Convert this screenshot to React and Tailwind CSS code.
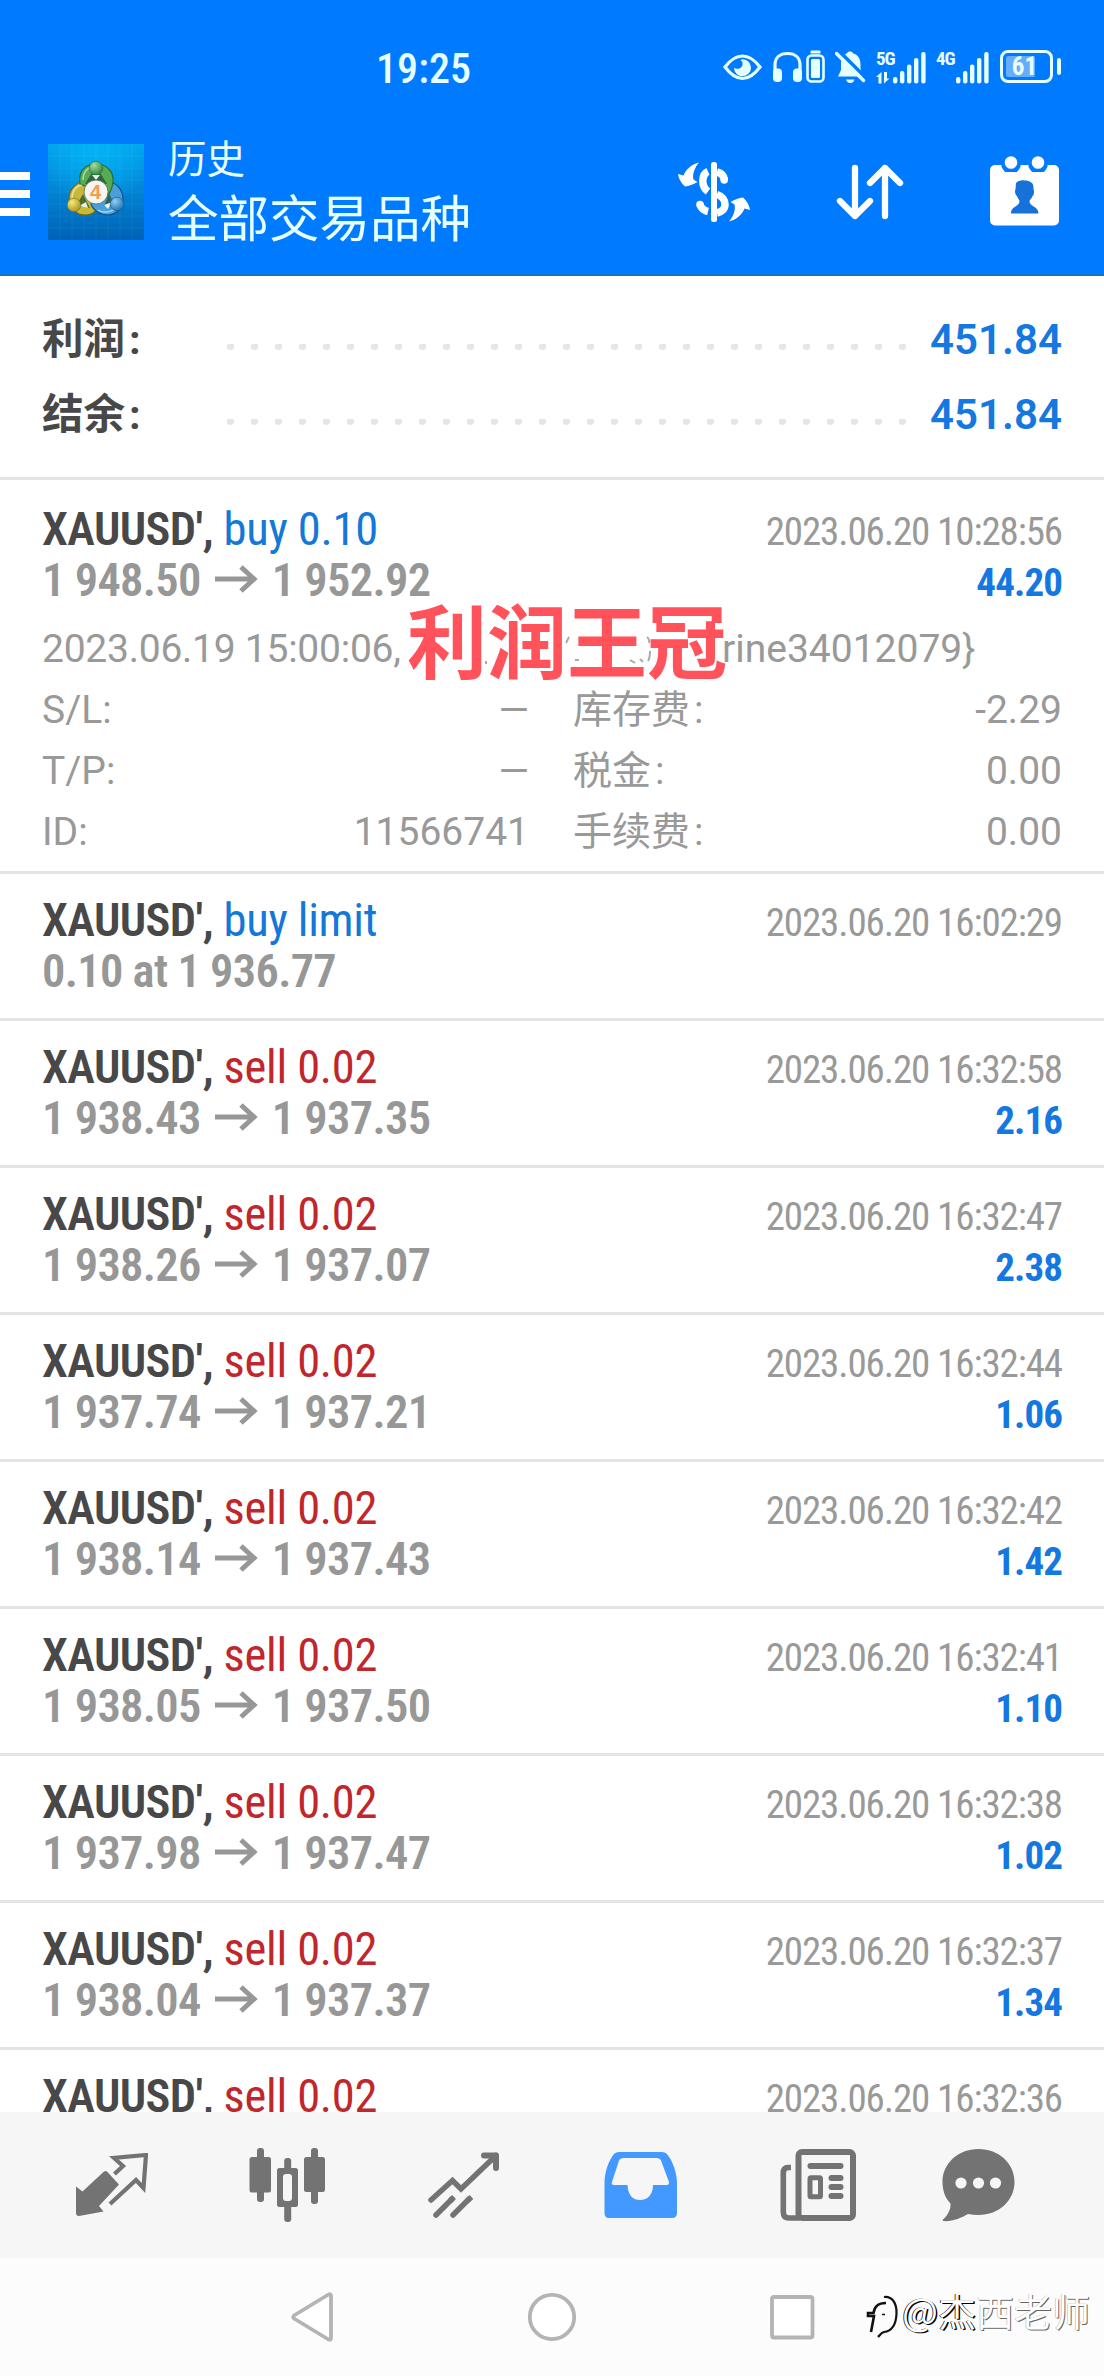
const deals = [
  { type: 'sell 0.02', from: '1 938.43', to: '1 937.35', time: '2023.06.20 16:32:58', profit: '2.16' },
  { type: 'sell 0.02', from: '1 938.26', to: '1 937.07', time: '2023.06.20 16:32:47', profit: '2.38' },
  { type: 'sell 0.02', from: '1 937.74', to: '1 937.21', time: '2023.06.20 16:32:44', profit: '1.06' },
  { type: 'sell 0.02', from: '1 938.14', to: '1 937.43', time: '2023.06.20 16:32:42', profit: '1.42' },
  { type: 'sell 0.02', from: '1 938.05', to: '1 937.50', time: '2023.06.20 16:32:41', profit: '1.10' },
  { type: 'sell 0.02', from: '1 937.98', to: '1 937.47', time: '2023.06.20 16:32:38', profit: '1.02' },
  { type: 'sell 0.02', from: '1 938.04', to: '1 937.37', time: '2023.06.20 16:32:37', profit: '1.34' },
];

const SignalBars = () => (
  <svg className="w-[33px] h-[32px]" viewBox="0 0 33 32" fill="currentColor">
    <rect x="0" y="25" width="4.4" height="6.5" rx="2" />
    <rect x="7" y="19" width="4.4" height="12.5" rx="2" />
    <rect x="14" y="12.5" width="4.4" height="19" rx="2" />
    <rect x="21" y="6" width="4.4" height="25.5" rx="2" />
    <rect x="28.2" y="0" width="4.4" height="31.5" rx="2" />
  </svg>
);

const StatusBar = () => (
  <div className="flex items-start h-[136px] pt-[50px] pl-[376px] text-[#e6ffff]">
    <span className="w-[347px] text-[42px] leading-[37px] font-medium [font-stretch:83%] tracking-[0.1px]">19:25</span>
    <svg className="w-[39px] h-[34px]" viewBox="0 0 39 34">
      <path d="M2 17C8 9 13 6 19.500 6S31 9 37 17C31 25 26 28.500 19.500 28.500S8 25 2 17Z" fill="none" stroke="currentColor" strokeWidth="3.200" />
      <path d="M19 9.200A8.500 8.500 0 1 1 11 17.500C12.500 19 16 19.500 18 17.500S20.500 12 17.500 10Z" fill="currentColor" />
    </svg>
    <svg className="w-[29px] h-[34px] ml-[11px]" viewBox="0 0 29 34">
      <path d="M2 22V15C2 7.500 7 3.500 14.500 3.500S27 7.500 27 15V22" fill="none" stroke="currentColor" strokeWidth="3.200" />
      <rect x="0" y="18.500" width="9" height="13.500" rx="4" fill="currentColor" />
      <rect x="20" y="18.500" width="9" height="13.500" rx="4" fill="currentColor" />
    </svg>
    <svg className="w-[19px] h-[34px] ml-[4px]" viewBox="0 0 19 34" fill="none">
      <rect x="4.500" y="0.500" width="10" height="3" rx="1" fill="currentColor" />
      <rect x="1.500" y="5.500" width="16" height="26" rx="4" stroke="currentColor" strokeWidth="2.600" />
      <rect x="5" y="9" width="9" height="19" rx="1.500" fill="currentColor" />
    </svg>
    <svg className="w-[31px] h-[34px] ml-[10px]" viewBox="0 0 31 34">
      <path d="M15 1.500C16.500 1.500 17.500 2.200 18 3.200C23 4.500 25.500 9 25.500 14V19L28 26.500H3L6 20V13C6 9 8 5 12 3.200C12.500 2.200 13.500 1.500 15 1.500ZM11 29.500H19.500C19 32 17 33 15.300 33S11.500 32 11 29.500Z" fill="currentColor" />
      <path d="M3 0L31 28" stroke="#007aff" strokeWidth="3.500" />
      <path d="M1.500 3.500L28.500 30.500" stroke="currentColor" strokeWidth="3.400" strokeLinecap="round" />
    </svg>
    <div className="w-[18px] h-[34px] ml-[10px] pt-px flex flex-col">
      <span className="text-[19px] leading-[16px] font-bold font-['Roboto_Condensed'] tracking-[-1px]">5G</span>
      <svg className="w-[14px] h-[12px] mt-[5px]" viewBox="0 0 14 12">
        <path d="M0 5L5.500 0V11.500H2.500V5ZM8 0V11.500L13.500 6.500H11V0Z" fill="currentColor" />
      </svg>
    </div>
    <div className="mt-[1.500px] -ml-[1px]"><SignalBars /></div>
    <span className="w-[19px] ml-[10px] pt-px text-[19px] leading-[16px] font-bold font-['Roboto_Condensed'] tracking-[-1px]">4G</span>
    <div className="mt-[1.500px] ml-px"><SignalBars /></div>
    <div className="flex items-center ml-[11px]">
      <div className="relative w-[53px] h-[33px] border-[3px] rounded-[8px] border-[#e6ffff] flex items-center justify-center">
        <div className="absolute left-[3px] top-[3px] w-[29px] h-[21px] rounded-[2px] bg-[#66adff]"></div>
        <span className="relative text-[25px] leading-[25px] font-bold [font-stretch:85%] -ml-[4px]">61</span>
      </div>
      <div className="w-[4px] h-[17px] ml-[4px] rounded-full bg-[#e6ffff]"></div>
    </div>
  </div>
);

const Logo = () => (
  <svg className="w-[96px] h-[96px]" viewBox="0 0 96 96">
    <defs>
      <linearGradient id="sky" x1="0" y1="0" x2="0" y2="1">
        <stop offset="0" stopColor="#02a3ee" />
        <stop offset="0.5" stopColor="#0283d4" />
        <stop offset="1" stopColor="#0062b4" />
      </linearGradient>
      <radialGradient id="glow" cx="0.5" cy="0.05" r="0.6">
        <stop offset="0" stopColor="#03b2f4" />
        <stop offset="1" stopColor="#03b2f4" stopOpacity="0" />
      </radialGradient>
      <radialGradient id="green" cx="0.35" cy="0.3" r="0.8">
        <stop offset="0" stopColor="#a5dc9c" />
        <stop offset="1" stopColor="#27823b" />
      </radialGradient>
      <radialGradient id="yellow" cx="0.35" cy="0.3" r="0.8">
        <stop offset="0" stopColor="#f5eb7d" />
        <stop offset="1" stopColor="#a38c1c" />
      </radialGradient>
      <radialGradient id="blue" cx="0.35" cy="0.3" r="0.8">
        <stop offset="0" stopColor="#8fd0f6" />
        <stop offset="1" stopColor="#1769ad" />
      </radialGradient>
    </defs>
    <rect width="96" height="96" fill="url(#sky)" />
    <rect width="96" height="96" fill="url(#glow)" />
    <path d="M0 12H96M0 24H96M0 36H96M0 48H96M0 60H96M0 72H96M0 84H96M12 0V96M24 0V96M36 0V96M48 0V96M60 0V96M72 0V96M84 0V96" stroke="#fff" strokeOpacity="0.06" />
    {/* three discs with a figure each, around the version badge */}
    <path d="M35 38C29 38 21 45 21 54C21 65 29 71 37 71C42 71 46 69 48 66L50 48Z" fill="#c9ba35" stroke="#6d6413" strokeWidth="1.200" />
    <path d="M61 38C69 39 75 46 75 55C75 65 67 71 60 71C52 71 45 66 43 60L50 46Z" fill="#4a9fdb" stroke="#12558c" strokeWidth="1.200" />
    <path d="M32 40C30 27 37 20 48 20C60 20 66 29 65 38C64 46 61 51 57 55L48 46Z" fill="#57ab53" stroke="#236d30" strokeWidth="1.200" />
    <path d="M35 36C35 28 40 23 46 23M24 54C24 47 28 42 34 41M50 66C54 69 66 70 71 60" fill="none" stroke="#fff" strokeOpacity="0.55" strokeWidth="1.500" />
    <path d="M37 40L45 27H51L59 40ZM28 62L35 50L42 64ZM56 62L61 50L68 62Z" fill="#1f5136" fillOpacity="0.75" />
    <path d="M44 31L48 36L52 31ZM31 62L38 58L40 64ZM56 61L64 58L60 65Z" fill="#e8f2e6" />
    <circle cx="48" cy="24" r="6.800" fill="url(#green)" stroke="#2a6a34" strokeWidth="0.600" />
    <circle cx="26" cy="61" r="6.800" fill="url(#yellow)" stroke="#7a6c15" strokeWidth="0.600" />
    <circle cx="69" cy="60" r="6.800" fill="url(#blue)" stroke="#15558c" strokeWidth="0.600" />
    <circle cx="48" cy="48" r="12" fill="#f7f4f2" stroke="#4f6b52" strokeWidth="0.800" />
    <text x="47.500" y="55" textAnchor="middle" fontSize="20" fontWeight="600" fontFamily="Liberation Sans, sans-serif" fill="#f39b50">4</text>
  </svg>
);

const Header = () => (
  <header className="h-[276px] shrink-0 bg-[#007aff] border-b-2 border-[#1a6fc8] text-white">
    <StatusBar />
    <div className="flex items-start">
      <div className="w-[30px] mt-[36px] flex flex-col gap-[10px]">
        <div className="h-[8px] bg-white"></div>
        <div className="h-[8px] bg-white"></div>
        <div className="h-[8px] bg-white"></div>
      </div>
      <div className="mt-[8px] ml-[18px]"><Logo /></div>
      <div className="w-[510px] ml-[24px] -mt-[2px] text-[#e6ffff] font-['Noto_Sans_CJK_SC']">
        <div className="text-[38.500px] leading-[44px]">历史</div>
        <div className="text-[50.500px] leading-[64px] mt-[5px]">全部交易品种</div>
      </div>
      <svg className="w-[72px] h-[60px] mt-[26px]" viewBox="0 0 72 60">
        <rect x="33" y="0" width="6" height="60" rx="2.500" fill="#fff" />
        <g fill="none" stroke="#fff" strokeWidth="7.500">
          <path d="M30 9.500C26.500 11 24.800 15 24.800 19S26.500 27 30 29.500" />
          <path d="M39 10C43 11 46 14 46.500 18" />
          <path d="M46.200 17.500V18" strokeLinecap="round" />
          <path d="M39 32.500C44 34 47 38 47 42.500S43.500 50 39 51" />
          <path d="M30 49.500C26 48.500 23 46 22 42.500" />
          <path d="M22 42.500V42.600" strokeLinecap="round" />
        </g>
        <g fill="#fff">
          <path d="M21 0.500C13 2.500 7.500 8 5.500 13.500L0 12C0.500 16 3 21 7 24.500C11 24 15 22.500 19.500 20L15.500 17.500C14 12 17 5 21 0.500Z" />
          <path d="M51 59.500C59 57.500 64.500 52 66.500 46.500L72 48C71.500 44 69 39 65 35.500C61 36 57 37.500 52.500 40L56.500 42.500C58 48 55 55 51 59.500Z" />
        </g>
      </svg>
      <svg className="w-[68px] h-[56px] ml-[86px] mt-[28px]" viewBox="0 0 68 56" fill="none" stroke="#fff" strokeWidth="6.300" strokeLinecap="round" strokeLinejoin="round">
        <path d="M19 4V52M4 37L19 52L34 37" />
        <path d="M49 52V4M34 19L49 4L64 19" />
      </svg>
      <svg className="w-[69px] h-[70px] ml-[86px] mt-[20px]" viewBox="0 0 69 70">
        <rect y="9" width="69" height="60.500" rx="5" fill="#fff" />
        <path d="M12 9H30V11L27 15.500H15L12 11ZM39 9H57V11L54 15.500H42L39 11Z" fill="#007aff" stroke="#007aff" />
        <circle cx="21" cy="6.500" r="6.300" fill="#fff" />
        <circle cx="48" cy="6.500" r="6.300" fill="#fff" />
        <path d="M34.500 24.500C31 24 28 25 26 27C25.500 30 26 33 25 35C25 38 26 39.500 27 40C27.500 42 29 43.500 29.500 45C29.500 51 21 50 21 57.500H48.500C48.500 50 39.500 51 39.500 45C40 43.500 42 42 42.500 40C43.500 39.500 44 38 44 35C43 33 44 30 42.500 27.500C40 25 37 24.500 34.500 24.500Z" fill="#1672d8" />
      </svg>
    </div>
  </header>
);

const SummaryRow = ({ label, value }) => (
  <div className="flex items-baseline justify-between h-[75px] leading-[75px]">
    <span className="w-[184px] text-[41.500px] font-bold text-[#484848]">{label}<span className="ml-[4px]">:</span></span>
    <svg className="w-[680px] h-[10px]" viewBox="0 0 680 10">
      {Array.from({ length: 29 }).map((_, i) => (
        <circle key={i} cx={4.5 + i * 24} cy="2.500" r="3.600" fill="#e6e6e6" />
      ))}
    </svg>
    <span className="w-[156px] text-right text-[42px] font-semibold text-[#1478e0]">{value}</span>
  </div>
);

const Arrow = () => (
  <svg className="inline-block w-[43px] h-[28px] mx-[14px] align-[3px]" viewBox="0 0 43 28" fill="none" stroke="currentColor" strokeWidth="5">
    <path d="M0 14H40M26 2L39 14L26 26" />
  </svg>
);

const Deal = ({ type, from, to, text, time, profit, className = 'h-[147px] pt-[21px]', children }) => (
  <div className={`border-b-[3px] border-[#e4e4e4] px-[42px] shrink-0 font-['Roboto_Condensed'] ${className}`}>
    <div className="flex items-baseline justify-between h-[51px] leading-[51px]">
      <div className="text-[46.500px]">
        <span className="font-semibold text-[#484848] tracking-[-0.600px]">XAUUSD',</span>{' '}
        <span className={`tracking-[-0.300px] ${type.startsWith('buy') ? 'text-[#1478d8]' : 'text-[#c0262b]'}`}>{type}</span>
      </div>
      <span className="text-[39px] tracking-[-1.100px] text-[#999]">{time}</span>
    </div>
    <div className="flex items-baseline justify-between h-[51px] leading-[51px]">
      <div className="text-[46.500px] font-semibold tracking-[-0.700px] text-[#979797] whitespace-nowrap">
        {text || <>{from}<Arrow />{to}</>}
      </div>
      <span className="text-[39px] font-bold tracking-[-0.900px] text-[#1478e0]">{profit}</span>
    </div>
    {children}
  </div>
);

const Detail = ({ left, leftValue, right, rightValue }) => (
  <div className="flex h-[61px] leading-[61px]">
    <span className="flex justify-between w-[487px]"><span>{left}</span><span>{leftValue}</span></span>
    <span className="flex justify-between w-[489px] ml-[44px]">
      <span>{right}<span className="ml-[4px]">:</span></span>
      <span>{rightValue}</span>
    </span>
  </div>
);

const TabBar = () => (
  <nav className="flex items-center h-[146px] pl-[76px] bg-[#f6f6f6] text-[#737373] shrink-0">
    <svg className="w-[72px] h-[64px]" viewBox="0 0 72 64">
      <path d="M0 33.500L6.500 38.500L28 18.500Q29.500 17.500 31 18.500L43 31.500L23 53L27.500 58.500L3 63Q0 63 0 60Z" fill="currentColor" />
      <path d="M38.500 21L47 13L38 5L70 2L67.500 35L60 27L34 51" fill="none" stroke="currentColor" strokeWidth="4.200" />
    </svg>
    <svg className="w-[76px] h-[74px] ml-[101px]" viewBox="0 0 76 74" fill="currentColor">
      <rect x="8" y="0" width="7" height="54" rx="3" />
      <rect x="0.500" y="9" width="21.500" height="35.500" rx="2.500" />
      <rect x="35.200" y="10" width="7" height="64" rx="3" />
      <rect x="28" y="20" width="21" height="39" rx="2.500" />
      <rect x="34" y="26" width="9" height="27" rx="3" fill="#f6f6f6" />
      <rect x="62" y="0" width="7" height="56" rx="3" />
      <rect x="55" y="9" width="21" height="35" rx="2.500" />
    </svg>
    <svg className="w-[72px] h-[66px] ml-[103px]" viewBox="0 0 72 66" fill="none" stroke="currentColor" strokeWidth="5.500" strokeLinecap="round">
      <path d="M3 48L24.500 28.500L33 37L68 3.500" />
      <path d="M56 3.500H68V16" strokeWidth="6" strokeLinejoin="round" />
      <path d="M8 63L24 47M25 63L41 47" />
      <path d="M22 49L26 45M39 49L43.500 45" strokeLinecap="butt" />
    </svg>
    <svg className="w-[73px] h-[66px] ml-[104px]" viewBox="0 0 73 66">
      <path d="M0.500 30C0.500 20 5 8 10 2Q12 0 15 0H58Q61 0 63 2C69 9 73 22 73 31V61Q73 66 68 66H5Q0.500 66 0.500 61Z" fill="#4399ff" />
      <path d="M19 6H53Q56 6 57 8.500L65 30Q65.500 33 62.500 33H49C49 42 44 48 36 48S24 42 23.500 33H10Q7 33 8 30L15 8.500Q16 6 19 6Z" fill="#f6f6f6" />
    </svg>
    <svg className="w-[76px] h-[72px] ml-[103px]" viewBox="0 0 76 72">
      <path d="M11 18.500H8Q3.300 18.500 3.300 24V63Q3.300 69 9 69H20" fill="none" stroke="currentColor" strokeWidth="5.600" />
      <rect x="18.500" y="3" width="54.500" height="66" rx="3.500" fill="none" stroke="currentColor" strokeWidth="6" />
      <g fill="currentColor">
        <rect x="27.500" y="14" width="36" height="6" rx="3" />
        <rect x="48.500" y="26" width="15" height="6" rx="3" />
        <rect x="48.500" y="35" width="15" height="6" rx="3" />
        <rect x="48.500" y="44" width="15" height="6" rx="3" />
      </g>
      <rect x="30" y="28.800" width="10.500" height="19" rx="1" fill="none" stroke="currentColor" strokeWidth="5" />
    </svg>
    <svg className="w-[73px] h-[73px] ml-[86px]" viewBox="0 0 73 73">
      <path d="M36.500 0C57 0 72.500 14.500 72.500 33S57 66 36.500 66C33 66 29.500 65.500 26 65C19 69 10 73 1 72Q0 71 1.500 70C6 66 9 60 8.500 54.500C3 49 0.500 41 0.500 33C0.500 14.500 16 0 36.500 0Z" fill="currentColor" />
      <g fill="#f6f6f6">
        <circle cx="19" cy="34" r="5.600" />
        <circle cx="36.500" cy="34" r="5.600" />
        <circle cx="53.500" cy="34" r="5.600" />
      </g>
    </svg>
  </nav>
);

const SystemNav = () => (
  <div className="relative flex items-center h-[118px] pl-[291px] bg-[#fcfcfc] shrink-0">
    <svg className="w-[524px] h-[50px]" viewBox="0 0 524 50" fill="#fff" stroke="#b4b4b4" strokeWidth="3.800" strokeLinejoin="round">
      <path d="M3 23.500Q1.500 25 3 26.500L37.500 47.500Q40 48.500 40 46V4Q40 1.500 37.500 2.500Z" />
      <circle cx="261" cy="25" r="22.200" />
      <rect x="481" y="5" width="40.500" height="40.500" rx="2" />
    </svg>
    <div className="absolute left-[865px] top-[32px] flex items-center text-white">
      <svg className="w-[34px] h-[50px]" viewBox="0 0 34 50" fill="none" stroke="#111">
        <path d="M6 42L9 26H3V23H8.500C9.500 16 13 13 21 13" strokeWidth="2.600" />
        <path d="M19 7C27 6 32 13 31.500 24C31 34 27 41 19 42C16 43 15 45 13 47" strokeWidth="2.200" />
        <path d="M17 24.500H20" strokeWidth="1.500" />
      </svg>
      <span className="ml-[3px] -mt-[10px] text-[38px] leading-[44px] whitespace-nowrap font-['Noto_Sans_CJK_SC']">
        <span className="[text-shadow:1.500px_1px_0_#000,-0.700px_-0.500px_0_#000]">@杰</span>
        <span className="[text-shadow:1px_1px_0_#666,-0.500px_-0.500px_0_#aaa]">西老师</span>
      </span>
    </div>
  </div>
);

export default function App() {
  return (
    <div className="flex flex-col w-[1104px] h-[2376px] overflow-hidden bg-white font-['Roboto','Noto_Sans_CJK_SC',sans-serif]">
      <Header />
      <section className="h-[204px] shrink-0 pt-[26px] px-[42px] border-b-[3px] border-[#e4e4e4]">
        <SummaryRow label="利润" value="451.84" />
        <SummaryRow label="结余" value="451.84" />
      </section>

      <main className="flex flex-col flex-1 min-h-0 overflow-hidden">
        <Deal type="buy 0.10" from="1 948.50" to="1 952.92" time="2023.06.20 10:28:56" profit="44.20" className="h-[394px] pt-[24px]">
          <div className="mt-[13px] text-[39px] text-[#999] font-['Roboto','Noto_Sans_CJK_SC',sans-serif]">
            <div className="relative flex h-[61px] leading-[61px]">
              <span className="w-[680px] tracking-[-0.250px]">2023.06.19 15:00:06,</span>
              <span>rine34012079&#125;</span>
              <svg className="absolute left-[440px] top-[10px] w-[170px] h-[46px]" viewBox="0 0 170 46" fill="none" stroke="#aaa" strokeWidth="2">
                <path d="M4 32V35M87 8L84 14M93 31H97M148 31L153 34M158 30L161 33M165 8Q168 10 167 14M166 32Q168 29 168 22" />
              </svg>
              <span className="absolute left-[365px] -top-[13px] text-[80px] leading-[79px] font-bold text-[#ff525b] whitespace-nowrap">利润王冠</span>
            </div>
            <Detail left="S/L:" leftValue="—" right="库存费" rightValue="-2.29" />
            <Detail left="T/P:" leftValue="—" right="税金" rightValue="0.00" />
            <Detail left="ID:" leftValue="11566741" right="手续费" rightValue="0.00" />
          </div>
        </Deal>
        <Deal type="buy limit" text="0.10 at 1 936.77" time="2023.06.20 16:02:29" />
        {deals.map((deal, idx) => (
          <Deal key={idx} {...deal} />
        ))}
        <Deal type="sell 0.02" time="2023.06.20 16:32:36" />
      </main>

      <TabBar />
      <SystemNav />
    </div>
  );
}
